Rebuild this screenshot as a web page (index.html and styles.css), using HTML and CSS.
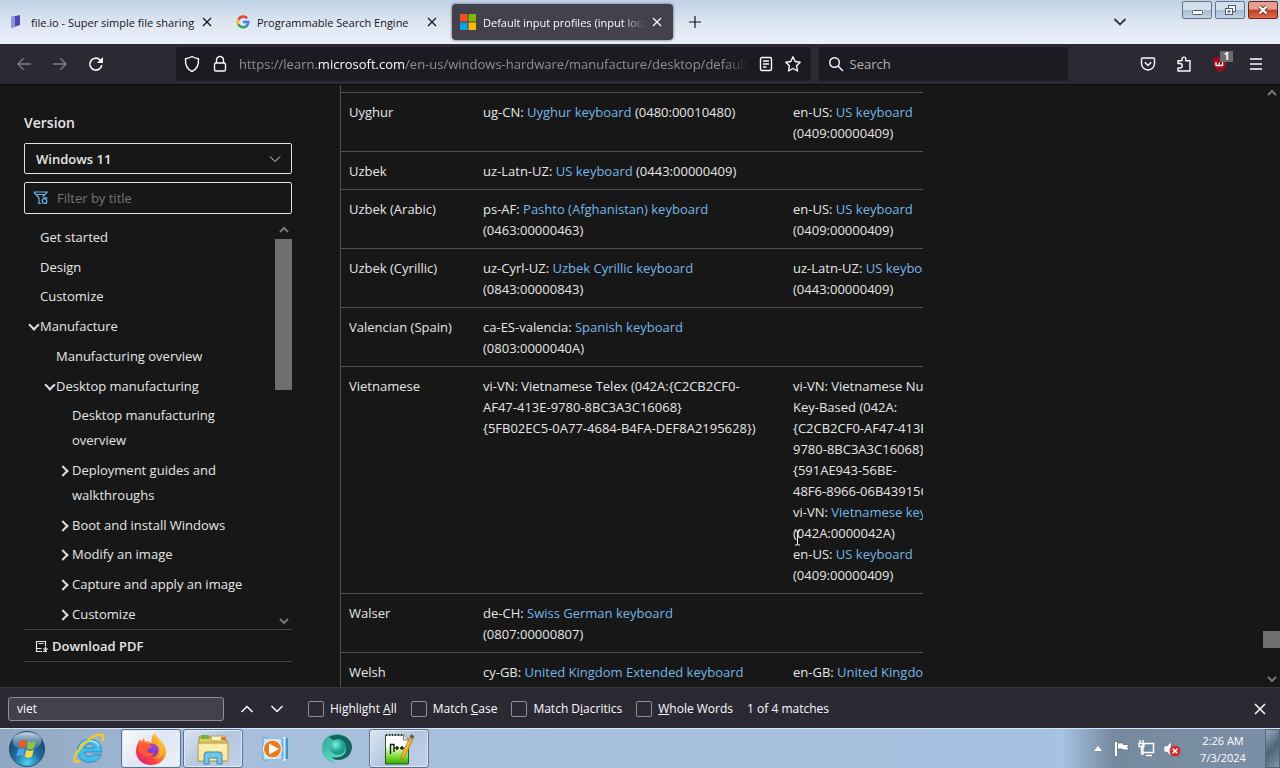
FILE: index.html
```html
<!DOCTYPE html>
<html lang="en">
<head>
<meta charset="utf-8">
<title>Default input profiles (input locales) in Windows</title>
<link rel="stylesheet" href="styles.css">
</head>
<body>
<header class="tabstrip">
  <div class="tab tab-file">
    <svg class="favicon" width="16" height="16" viewBox="0 0 16 16"><path d="M3 3l9-2v10l-9 3z" fill="#4b47b5"/><path d="M3 3l4-1v11l-4 1z" fill="#8f94e6"/></svg>
    <button class="tab-title">file.io - Super simple file sharing</button>
    <button class="tab-close" aria-label="Close tab"><svg width="10" height="10" viewBox="0 0 10 10"><path d="M1 1l8 8M9 1l-8 8"/></svg></button>
  </div>
  <div class="tab tab-search">
    <svg class="favicon" width="14" height="14" viewBox="0 0 16 16" fill="none" stroke-width="3"><path d="M12.6 3.7A6 6 0 0 0 2.7 5.4" stroke="#ea4335"/><path d="M2.7 5.2a6 6 0 0 0 0 5.6" stroke="#fbbc05"/><path d="M2.7 10.6a6 6 0 0 0 9.3 2" stroke="#34a853"/><path d="M8 8h6a6 6 0 0 1-2.2 4.8" stroke="#4285f4"/></svg>
    <button class="tab-title">Programmable Search Engine</button>
    <button class="tab-close" aria-label="Close tab"><svg width="10" height="10" viewBox="0 0 10 10"><path d="M1 1l8 8M9 1l-8 8"/></svg></button>
  </div>
  <div class="tab tab-active">
    <svg class="favicon" width="16" height="16" viewBox="0 0 16 16"><path d="M0 0h7.500v7.500H0z" fill="#f25022"/><path d="M8.500 0H16v7.500H8.500z" fill="#7fba00"/><path d="M0 8.500h7.500V16H0z" fill="#00a4ef"/><path d="M8.500 8.500H16V16H8.500z" fill="#ffb900"/></svg>
    <button class="tab-title fade">Default input profiles (input locales)</button>
    <button class="tab-close" aria-label="Close tab"><svg width="10" height="10" viewBox="0 0 10 10"><path d="M1 1l8 8M9 1l-8 8"/></svg></button>
  </div>
  <button class="new-tab" aria-label="New tab"><svg width="12" height="12" viewBox="0 0 12 12"><path d="M6 0v12M0 6h12"/></svg></button>
  <button class="all-tabs" aria-label="List all tabs"><svg width="14" height="8" viewBox="0 0 14 8"><path d="M1.500 1l5.500 5.500L12.500 1"/></svg></button>
  <div class="window-buttons">
    <button class="win" aria-label="Minimize"><svg width="28" height="16" viewBox="0 0 28 16"><rect x="9.500" y="8.500" width="10" height="4" rx="1" fill="#fff" stroke="#4c5a70"/></svg></button>
    <button class="win" aria-label="Restore"><svg width="28" height="16" viewBox="0 0 28 16" fill="#fff" stroke="#4c5a70"><rect x="12.500" y="3.500" width="7" height="6"/><rect x="9.500" y="6.500" width="7" height="6"/><rect x="12" y="9" width="2" height="1" fill="#9fb2cb"/></svg></button>
    <button class="win win-close" aria-label="Close"><svg width="28" height="16" viewBox="0 0 28 16"><path d="M10.500 4.500l7 7m0-7l-7 7" stroke="#6d2a25" stroke-width="4"/><path d="M10.500 4.500l7 7m0-7l-7 7" stroke="#fff" stroke-width="2.400"/></svg></button>
  </div>
</header>

<nav class="toolbar" aria-label="Navigation">
  <button class="tool dim" aria-label="Back"><svg width="16" height="16" viewBox="0 0 16 16"><path d="M15 8H2M7.500 2.500L2 8l5.500 5.500"/></svg></button>
  <button class="tool dim" aria-label="Forward"><svg width="16" height="16" viewBox="0 0 16 16"><path d="M1 8h13M8.500 2.500L14 8l-5.500 5.500"/></svg></button>
  <button class="tool" aria-label="Reload"><svg width="16" height="16" viewBox="0 0 16 16"><path d="M13.800 9A6 6 0 1 1 12 3.800l1.500 1.500" stroke-width="1.600"/><path d="M15 1v6H9z" fill="#fbfbfe" stroke="none"/></svg></button>
  <div class="field address">
    <svg width="18" height="18" viewBox="0 0 18 18"><path d="M9 1.500c2 1.300 4 2 6.500 2.200.4 6-1.500 10.500-6.500 12.800C4 14.200 2.100 9.700 2.500 3.700 5 3.500 7 2.800 9 1.500z"/></svg>
    <svg width="18" height="18" viewBox="0 0 18 18"><rect x="3.500" y="8" width="11" height="8" rx="1.500"/><path d="M5.500 8V5a3.500 3.500 0 0 1 7 0v3"/></svg>
    <div class="url fade" role="textbox" aria-label="Address" contenteditable="true" spellcheck="false">https://learn.<b>microsoft.com</b>/en-us/windows-hardware/manufacture/desktop/default-input-locales</div>
    <svg width="16" height="16" viewBox="0 0 16 16"><rect x="2.500" y="1.500" width="11" height="13" rx="1.500"/><path d="M5 5h6M5 8h6M5 11h3.500"/></svg>
    <svg width="18" height="18" viewBox="0 0 18 18"><path d="M9 1.800l2.200 4.700 5 .7-3.600 3.600.9 5.200L9 13.500 4.500 16l.9-5.200L1.800 7.200l5-.7z"/></svg>
  </div>
  <label class="field search">
    <svg width="16" height="16" viewBox="0 0 16 16"><circle cx="6.500" cy="6.500" r="4.800"/><path d="M10 10l5 5"/></svg>
    <input type="text" placeholder="Search" aria-label="Search">
  </label>
  <div class="tools-right">
    <button class="tool" aria-label="Save to Pocket"><svg width="16" height="16" viewBox="0 0 16 16"><path d="M2.500 2h11a1 1 0 0 1 1 1v4.500a6.500 6.500 0 0 1-13 0V3a1 1 0 0 1 1-1z"/><path d="M4.800 6.300L8 9.400l3.200-3.100"/></svg></button>
    <button class="tool" aria-label="Extensions"><svg width="16" height="16" viewBox="0 0 16 16"><path d="M2 7.500V4.700h4V3a1.900 1.900 0 0 1 3.800 0v1.700H14V15H2v-3h2a2 2 0 0 0 0-4.500z"/></svg></button>
    <button class="tool blocker" aria-label="Ad blocker"><svg width="18" height="18" viewBox="0 0 18 18"><path d="M9 1c2 1.500 4 2 7 2 0 7-1 11-7 14C3 14 2 10 2 3c3 0 5-.5 7-2z" fill="#a30a18" stroke="none"/><path d="M5 7v3.500h3.300V7.500m0 3h3.300V7" stroke-width="1.300"/></svg><span class="count">1</span></button>
    <button class="tool" aria-label="Menu"><svg width="14" height="14" viewBox="0 0 14 14"><path d="M1 2h12M1 7h12M1 12h12"/></svg></button>
  </div>
</nav>

<div class="page">
  <aside class="sidebar">
    <label class="version" for="version">Version</label>
    <div class="select-box">
      <select id="version"><option>Windows 11</option></select>
      <svg width="12" height="8" viewBox="0 0 12 8"><path d="M1 1.500l5 5 5-5"/></svg>
    </div>
    <label class="filter">
      <svg width="16" height="14" viewBox="0 0 16 14"><path d="M.800 1h13.400L9.500 6.200M.800 1L6 7v5.500h2M3 3.500h9"/><circle cx="11.500" cy="10" r="2.300"/><path d="M10.500 6.800h4M14 12.500l-1-1"/></svg>
      <input type="text" placeholder="Filter by title" aria-label="Filter by title">
    </label>
    <div class="toc-box">
      <ul class="toc">
        <li><a href="#">Get started</a></li>
        <li><a href="#">Design</a></li>
        <li><a href="#">Customize</a></li>
        <li class="open"><a href="#">Manufacture</a></li>
        <li class="l2"><a href="#">Manufacturing overview</a></li>
        <li class="l2 open"><a href="#">Desktop manufacturing</a></li>
        <li class="l3"><a href="#">Desktop manufacturing<br>overview</a></li>
        <li class="l3 closed"><a href="#">Deployment guides and<br>walkthroughs</a></li>
        <li class="l3 closed"><a href="#">Boot and install Windows</a></li>
        <li class="l3 closed"><a href="#">Modify an image</a></li>
        <li class="l3 closed"><a href="#">Capture and apply an image</a></li>
        <li class="l3 closed"><a href="#">Customize</a></li>
      </ul>
      <div class="scrollbar toc-scroll">
        <svg width="10" height="8" viewBox="0 0 10 8"><path d="M1 6l4-4 4 4"/></svg>
        <div class="thumb"></div>
        <svg class="down" width="10" height="8" viewBox="0 0 10 8"><path d="M1 2l4 4 4-4"/></svg>
      </div>
    </div>
    <a class="pdf" href="#"><svg width="13" height="13" viewBox="0 0 13 13"><path d="M10.500 6V1.500h-9v7h5M1.500 8.500v3H7M3.500 3.500h5M8 11.500h4M10.500 6.500v4M8.500 8.500l2 2 2-2"/></svg>Download PDF</a>
  </aside>

  <main class="content">
    <table class="locales">
      <colgroup><col class="c1"><col class="c2"><col class="c3"></colgroup>
      <tbody>
      <tr><td>Uyghur</td><td>ug-CN: <a href="#">Uyghur keyboard</a> (0480:00010480)</td><td>en-US: <a href="#">US keyboard</a><br>(0409:00000409)</td></tr>
      <tr><td>Uzbek</td><td>uz-Latn-UZ: <a href="#">US keyboard</a> (0443:00000409)</td><td></td></tr>
      <tr><td>Uzbek (Arabic)</td><td>ps-AF: <a href="#">Pashto (Afghanistan) keyboard</a><br>(0463:00000463)</td><td>en-US: <a href="#">US keyboard</a><br>(0409:00000409)</td></tr>
      <tr><td>Uzbek (Cyrillic)</td><td>uz-Cyrl-UZ: <a href="#">Uzbek Cyrillic keyboard</a><br>(0843:00000843)</td><td>uz-Latn-UZ: <a href="#">US keyboard</a><br>(0443:00000409)</td></tr>
      <tr><td>Valencian (Spain)</td><td>ca-ES-valencia: <a href="#">Spanish keyboard</a><br>(0803:0000040A)</td><td></td></tr>
      <tr><td>Vietnamese</td><td>vi-VN: Vietnamese Telex (042A:{C2CB2CF0-<br>AF47-413E-9780-8BC3A3C16068}<br>{5FB02EC5-0A77-4684-B4FA-DEF8A2195628})</td><td>vi-VN: Vietnamese Number<br>Key-Based (042A:<br>{C2CB2CF0-AF47-413E-<br>9780-8BC3A3C16068}<br>{591AE943-56BE-<br>48F6-8966-06B43915CC5A})<br>vi-VN: <a href="#">Vietnamese keyboard</a><br><span class="pointed">(042A:0000042A)<svg class="ibeam" width="7" height="16" viewBox="0 0 7 16"><path d="M1 1h2l.5.500L4 1h2M3.500 1.500v13M1 15h2l.5-.5.5.5h2"/></svg></span><br>en-US: <a href="#">US keyboard</a><br>(0409:00000409)</td></tr>
      <tr><td>Walser</td><td>de-CH: <a href="#">Swiss German keyboard</a><br>(0807:00000807)</td><td></td></tr>
      <tr><td>Welsh</td><td>cy-GB: <a href="#">United Kingdom Extended keyboard</a></td><td>en-GB: <a href="#">United Kingdom keyboard</a></td></tr>
      </tbody>
    </table>
  </main>
  <div class="scrollbar page-scroll">
    <svg width="10" height="8" viewBox="0 0 10 8"><path d="M1 6l4-4 4 4"/></svg>
    <div class="thumb"></div>
    <svg class="down" width="10" height="8" viewBox="0 0 10 8"><path d="M1 2l4 4 4-4"/></svg>
  </div>
</div>

<section class="findbar" aria-label="Find in page">
  <input class="find-input" type="text" value="viet" aria-label="Find in page">
  <button class="find-nav" aria-label="Previous"><svg width="14" height="8" viewBox="0 0 14 8"><path d="M1.500 7L7 1.500 12.500 7"/></svg></button>
  <button class="find-nav" aria-label="Next"><svg width="14" height="8" viewBox="0 0 14 8"><path d="M1.500 1L7 6.500 12.500 1"/></svg></button>
  <div class="find-options">
    <label><input type="checkbox"><span>Highlight <u>A</u>ll</span></label>
    <label><input type="checkbox"><span>Match <u>C</u>ase</span></label>
    <label><input type="checkbox"><span>Match D<u>i</u>acritics</span></label>
    <label><input type="checkbox"><span><u>W</u>hole Words</span></label>
    <span>1 of 4 matches</span>
  </div>
  <button class="find-close" aria-label="Close find bar"><svg width="12" height="12" viewBox="0 0 12 12"><path d="M1 1l10 10M11 1L1 11"/></svg></button>
</section>

<footer class="taskbar">
  <button class="start" aria-label="Start"><svg width="38" height="38" viewBox="0 0 38 38">
    <defs><radialGradient id="orb" cx=".5" cy=".9" r=".85"><stop offset="0" stop-color="#49d4ef"/><stop offset=".45" stop-color="#1e6fa5"/><stop offset="1" stop-color="#173c61"/></radialGradient><linearGradient id="gloss" x2="0" y2="1"><stop offset="0" stop-color="#e6f3fb" stop-opacity=".85"/><stop offset="1" stop-color="#9cc3da" stop-opacity=".15"/></linearGradient></defs>
    <circle cx="19" cy="19" r="17.500" fill="url(#orb)" stroke="#244b6b"/><ellipse cx="19" cy="11" rx="14.500" ry="9" fill="url(#gloss)"/>
    <path d="M12 11c2.700-1.600 4.900-1.400 7 0l-1.700 7c-2.200-1.400-4.300-1.400-7 0z" fill="#ee5a24"/><path d="M20.200 11.500c2.500 1.400 4.900 1.300 7.600-.3l-1.700 7c-2.600 1.600-5 1.600-7.500.2z" fill="#8cc63f"/><path d="M10 19.300c2.700-1.500 4.900-1.400 7 0l-1.700 6.800c-2.200-1.300-4.300-1.300-7 .2z" fill="#43a9e8"/><path d="M18.300 19.700c2.500 1.400 4.800 1.400 7.500-.2l-1.700 7c-2.600 1.600-5 1.500-7.500 0z" fill="#ffd33c"/></svg></button>
  <button class="task" aria-label="Internet Explorer"><svg width="34" height="34" viewBox="0 0 34 34">
    <path d="M29.500 20H12.500c.4 3 2.300 4.500 5 4.500 2 0 3.400-.7 4.300-2.200h7.300c-1.700 5.200-6 8-11.500 8-7 0-12.100-4.600-12.100-11.500S10.500 7.500 17.500 7.500c7.500 0 12.300 5 12 12.500zM22.500 16c-.5-2.600-2.300-4-4.900-4s-4.400 1.400-5 4z" fill="#42bce9" stroke="#1685bd" stroke-width=".8"/><path d="M8 15c2-4 6-6 10-6s7 1.500 9 5" fill="none" stroke="#a8e7fa" stroke-width="1.500"/><path d="M8 29C2 32 .5 27 6 19 12 10 23 2 29 2.500c3 .5 2.500 4 1 7" fill="none" stroke="#f4c92c" stroke-width="2.500"/></svg></button>
  <button class="task running front" aria-label="Firefox"><svg width="32" height="32" viewBox="0 0 32 32">
    <defs><linearGradient id="fox" x1="1" x2=".1" y2="1"><stop offset="0" stop-color="#fff04a"/><stop offset=".4" stop-color="#ff9b22"/><stop offset=".7" stop-color="#ff3f45"/><stop offset="1" stop-color="#d91c78"/></linearGradient><linearGradient id="globe" x2="0" y2="1"><stop offset="0" stop-color="#a646e2"/><stop offset="1" stop-color="#5a3cc8"/></linearGradient></defs>
    <path d="M19 0c3 3 4 5 7 8 3 3 5 7 5 11 0 7-6 13-15 13S1 26 1 18c0-5 2-8 4-12l1 3 3-4 1 4c3-1 5 0 7 1-1-4 0-7 2-10z" fill="url(#fox)"/><circle cx="17" cy="17" r="6.500" fill="url(#globe)"/><path d="M3 14c3-4 7-5 10-3l4 2c-1 2-4 2-5 4 1 3 4 4 8 2-1 4-6 6-11 3-4-2-6-5-6-8z" fill="#ff5a35"/><path d="M22 11c5 5 4 12-2 15 8-1 11-8 7-15z" fill="#ffb72c"/></svg></button>
  <button class="task running" aria-label="Windows Explorer"><svg width="34" height="32" viewBox="0 0 34 32">
    <path d="M3 4h12l2 3h14v21H3z" fill="#e9c85e" stroke="#a68936"/><path d="M5 2h8v4H5z" fill="#69b445"/><path d="M15 3h14v5H15z" fill="#f9f2c6" stroke="#b79b48"/><path d="M25 4h5v3h-5z" fill="#df7538"/><path d="M2 10h30v18H2z" fill="#f9e99d" stroke="#b59a4d"/><path d="M4 13h26M4 16h26" stroke="#fff7cd"/><path d="M8 31V22q0-3 3-3h12q3 0 3 3v9h-5v-6h-8v6z" fill="#70c5e9" stroke="#3488b5"/></svg></button>
  <button class="task" aria-label="Windows Media Player"><svg width="28" height="26" viewBox="0 0 28 26"><rect x="10" y="2" width="17" height="21" fill="#3f93c5"/><rect x="7" y="2" width="17" height="22" fill="#8fccec" stroke="#fff"/><rect x="2" y="2" width="19" height="22" fill="#c8e3f2" stroke="#5ba2cb"/><circle cx="11.500" cy="13" r="9" fill="#ed7b18" stroke="#fff"/><path d="M8 7.500L18 13 8 18.500z" fill="#fff"/></svg></button>
  <button class="task" aria-label="Browser"><svg width="32" height="32" viewBox="0 0 32 32"><defs><linearGradient id="teal" x2="1" y2="1"><stop offset="0" stop-color="#2c9c8b"/><stop offset=".5" stop-color="#4fd0b8"/><stop offset="1" stop-color="#75d8c8"/></linearGradient><radialGradient id="core" cx=".35" cy=".35"><stop offset="0" stop-color="#77f2dc"/><stop offset="1" stop-color="#1d9a8c"/></radialGradient></defs><path d="M16 1c9 0 15 6 15 13S25 27 17 27c-3 0-5-1-6-1 1 2 2 3 4 4C6 30 1 23 1 15S7 1 16 1z" fill="url(#teal)"/><path d="M8 4c10-5 23 0 23 10 0 7-6 13-14 13-3 0-5-1-6-3 9 2 15-3 14-9C24 9 19 7 13 8z" fill="#15625f"/><circle cx="17" cy="14" r="8" fill="url(#core)"/></svg></button>
  <button class="task running" aria-label="Notepad++"><svg width="32" height="34" viewBox="0 0 32 34"><defs><linearGradient id="npp" x2="0" y2="1"><stop offset=".35" stop-color="#fff"/><stop offset=".75" stop-color="#7fdc2a"/><stop offset="1" stop-color="#36a60b"/></linearGradient></defs><path d="M2.500 3h18l5 5v24h-23z" fill="url(#npp)" stroke="#315523"/><path d="M20.500 3v5h5" fill="#e8e8e8" stroke="#777"/><path d="M3 3h17" stroke="#333" stroke-width="2" stroke-dasharray="1 2"/><path d="M7.500 22V12.500h3.500V20M12 16h4m-2-2v4m3-2h4m-2-2v4" fill="none" stroke="#161d12" stroke-width="1.400"/><path d="M27 5l3 2-8 17-4 4 1-6z" fill="#f2b62b" stroke="#a7701c" stroke-width=".7"/><path d="M27 5l1-3 3 2-1 3z" fill="#555"/></svg></button>
  <div class="tray">
    <button class="tray-up" aria-label="Show hidden icons"><svg width="8" height="5" viewBox="0 0 8 5"><path d="M4 0l4 5H0z" fill="#fff"/></svg></button>
    <svg width="16" height="16" viewBox="0 0 16 16"><path d="M2 1v14" stroke="#fff" stroke-width="2"/><path d="M3.500 2h6v1.500H15L13.500 6 15 9H8.500V8h-5z" fill="#fff" stroke="#4a6077" stroke-width=".7"/></svg>
    <svg width="17" height="17" viewBox="0 0 17 17" fill="none" stroke="#fff"><rect x="5" y="3.500" width="10.500" height="9" fill="#6f879f" stroke-width="1.500"/><path d="M8 15.500h6M2 0v3m3-3v3M1 3.500h5v3H1zM3.500 7v7H6" stroke-width="1.300"/></svg>
    <svg width="18" height="16" viewBox="0 0 18 16"><path d="M1 5h3l4-4v14l-4-4H1z" fill="#fff" stroke="#6b7b8c" stroke-width=".6"/><circle cx="12" cy="10" r="5.500" fill="#d72b2b"/><path d="M9.700 7.700l4.600 4.600m0-4.600l-4.600 4.600" stroke="#fff" stroke-width="1.600"/></svg>
    <div class="clock"><span>2:26 AM</span><span>7/3/2024</span></div>
    <button class="show-desktop" aria-label="Show desktop"></button>
  </div>
</footer>
</body>
</html>
```
FILE: styles.css
```css
* { box-sizing: border-box; }
html, body { height: 100%; }
body {
  margin: 0;
  display: flex;
  flex-direction: column;
  overflow: hidden;
  background: #171717;
  color: #e6e6e6;
  font: 13px/21px "Open Sans", "Noto Sans", sans-serif;
}
button, input, select { font: inherit; color: inherit; margin: 0; padding: 0; border: 0; background: none; outline: 0; }
a { color: inherit; text-decoration: none; }
svg { display: block; flex: none; }
.fade { -webkit-mask-image: linear-gradient(to left, transparent, #000 24px); mask-image: linear-gradient(to left, transparent, #000 24px); }

/* Tabs */
.tabstrip {
  flex: none;
  height: 44px;
  display: flex;
  align-items: center;
  background: linear-gradient(to bottom, #c0d2e6, #dce5f1 50%, #eaf0fa);
  color: #15141a;
  font-size: 11px;
}
.tab { display: flex; align-items: center; height: 36px; padding: 0 8px; }
.tab-title { flex: 1; min-width: 0; overflow: hidden; white-space: nowrap; text-align: left; }
.tab-close svg, .new-tab svg, .all-tabs svg { fill: none; stroke: currentColor; stroke-width: 1.2; }
.favicon { margin-right: 7px; }
.tab-file { width: 225px; padding-right: 13px; }
.tab-search { width: 225px; padding-left: 11px; }
.tab-search .tab-close { margin-right: 5px; }
.tab-active { width: 221px; margin-left: 2px; background: #42414d; color: #fbfbfe; border-radius: 4px; box-shadow: 0 0 3px #555; }
.tab-active .tab-title { margin-right: 6px; }
.tab-active .tab-close { margin-right: 3px; }
.new-tab { margin-left: 16px; }
.all-tabs { margin-left: auto; color: #333; }
.all-tabs svg { stroke-width: 1.8; }
.window-buttons { display: flex; gap: 3px; align-self: flex-start; margin: 1px 2px 0 55px; }
.win { border: 1px solid #62758d; border-radius: 2px; background: linear-gradient(#d3deeb 48%, #a9bbd0 50%, #c4d4e5); }
.win-close { border-color: #71241d; background: linear-gradient(#e5a08f 45%, #c33c23 50%, #dc6c50); }

/* Toolbar */
.toolbar { flex: none; height: 41px; display: flex; align-items: center; background: #2b2a33; border-bottom: 1px solid #0c0c0d; padding-left: 16px; }
.toolbar svg { fill: none; stroke: #fbfbfe; stroke-width: 1.4; stroke-linejoin: round; }
.tool { margin-right: 20px; }
.dim { opacity: .4; }
.field { display: flex; align-items: center; height: 34px; background: #1c1b22; border-radius: 3px; }
.address { flex: 1 1 636px; min-width: 0; margin-left: 52px; padding: 0 9px 0 7px; gap: 10px; }
.url { flex: 1; min-width: 0; overflow: hidden; white-space: nowrap; color: #8f8f98; outline: 0; }
.url b { color: #fbfbfe; font-weight: 400; }
.search { flex: 0 1 250px; margin-left: 8px; padding-left: 9px; gap: 6px; }
.search input { flex: 1; min-width: 0; }
.search input::placeholder { color: #b0b0b6; opacity: 1; }
.tools-right { display: flex; align-items: center; margin-left: 72px; }
.tools-right .tool { margin-right: 20px; }
.tools-right .tool:last-child { margin-right: 17px; }
.tools-right .blocker { position: relative; margin: 0 20px 0 -1px; }
.count { position: absolute; right: -4px; top: -4px; width: 13px; height: 11px; background: #6c6c70; color: #fff; font: 700 10px/11px "Open Sans", sans-serif; }

/* Page */
.page { flex: 1; min-height: 0; display: flex; }
.sidebar { flex: none; width: 340px; padding: 27px 48px 25px 24px; display: flex; flex-direction: column; }
.version { font-size: 14px; font-weight: 600; line-height: 21px; margin-bottom: 10px; }
.select-box { display: flex; align-items: center; border: 1px solid #e3e3e3; border-radius: 2px; height: 31px; }
.select-box select { appearance: none; flex: 1; height: 100%; padding: 1px 0 0 11px; font-weight: 600; }
.select-box svg { fill: none; stroke: #e6e6e6; pointer-events: none; margin: 0 10px 0 -22px; }
.filter { display: flex; align-items: center; gap: 8px; border: 1px solid #e3e3e3; border-radius: 2px; height: 32px; margin-top: 8px; padding-left: 8px; }
.filter svg { fill: none; stroke: #66b5ee; stroke-width: 1.2; }
.filter input { flex: 1; min-width: 0; }
.filter input::placeholder { color: #757575; opacity: 1; }
.toc-box { flex: 1; min-height: 0; display: flex; margin-top: 8px; border-bottom: 1px solid #444; }
.toc { flex: 1; margin: 0; padding: 3px 0 2px; list-style: none; display: flex; flex-direction: column; justify-content: space-between; line-height: 25px; white-space: nowrap; }
.toc li { padding-left: 16px; position: relative; }
.toc .l2 { padding-left: 32px; }
.toc .l3 { padding-left: 48px; }
.open::before, .closed::before { content: ""; position: absolute; width: 6px; height: 6px; border: solid #ddd; border-width: 0 2px 2px 0; margin-left: -10px; top: 7px; transform: rotate(45deg); }
.closed::before { transform: rotate(-45deg); margin-left: -13px; top: 9px; }
.scrollbar { flex: none; width: 17px; display: flex; flex-direction: column; align-items: center; }
.scrollbar svg { fill: none; stroke: #777; stroke-width: 2; }
.scrollbar .thumb { width: 100%; background: #6e6e6e; }
.scrollbar .down { margin-top: auto; }
.toc-scroll { padding: 4px 0; }
.toc-scroll .thumb { height: 151px; margin-top: 5px; }
.pdf { display: flex; align-items: center; gap: 4px; height: 32px; padding: 1px 0 0 11px; border-bottom: 1px solid #444; font-weight: 600; }
.pdf svg { fill: none; stroke: #e6e6e6; stroke-width: 1.2; }

.content { flex: 0 1 583px; min-width: 0; overflow: hidden; border-left: 1px solid #505050; padding-top: 7px; }
.locales { table-layout: fixed; width: 694px; border-collapse: separate; border-spacing: 0; }
.c1 { width: 134px; }
.c2 { width: 310px; }
.c3 { width: 250px; }
.locales td { padding: 9px 8px 7px; border-top: 1px solid #505050; vertical-align: top; white-space: nowrap; }
.locales a { color: #75b6e7; }
.pointed { position: relative; }
.ibeam { position: absolute; left: 1px; top: 6px; fill: none; stroke: #fff; }
.page-scroll { margin-left: auto; padding: 4px 0; }
.page-scroll .thumb { height: 17px; margin-top: auto; }
.page-scroll .down { margin-top: 27px; }

/* Find bar */
.findbar { flex: none; height: 41px; display: flex; align-items: center; background: #2b2a33; border-top: 1px solid #38383d; padding: 1px 13px 0 8px; color: #fbfbfe; font-size: 12px; }
.findbar svg { fill: none; stroke: #fbfbfe; stroke-width: 1.5; }
.find-input { width: 216px; height: 24px; padding: 0 8px; border: 1px solid #8f8f9d; border-radius: 3px; background: #42414d; }
.find-nav { margin-left: 16px; }
.find-options { display: flex; align-items: center; gap: 14px; margin-left: 24px; white-space: nowrap; }
.find-options label { display: flex; align-items: center; gap: 6px; }
.find-options input { appearance: none; width: 16px; height: 16px; border: 1px solid #8f8f9d; border-radius: 2px; background: #2b2a33; }
.find-close { margin-left: auto; margin-right: 1px; }

/* Taskbar */
.taskbar { flex: none; height: 40px; display: flex; gap: 2px; border-top: 1px solid #d7e5f3; background: linear-gradient(to right, #8fa6c0, #a6bfdc 220px, #a6c1df 80%, #a6c3e3 83%, #75899f 87%, #7b8fa6); }
.start { width: 57px; padding-left: 8px; }
.task { width: 60px; display: flex; align-items: center; justify-content: center; border-radius: 3px; }
.running { border: 1px solid #5c7392; background: linear-gradient(135deg, #dbe5f1, #b3c6de 50%, #c3d3e8); box-shadow: inset 0 0 0 1px #dfe9f5; }
.front { background: linear-gradient(135deg, #fbfcfe, #dde6f3 50%, #edf2fa); }
.tray { margin-left: auto; display: flex; align-items: center; gap: 8px; color: #fff; }
.tray-up { margin-right: 4px; }
.clock { display: flex; flex-direction: column; align-items: center; width: 68px; font-size: 11px; line-height: 17px; }
.show-desktop { width: 15px; height: 100%; border: 1px solid #50657c; background: linear-gradient(135deg, #9aabbc, #4f6377 50%, #8396a9); }
```
